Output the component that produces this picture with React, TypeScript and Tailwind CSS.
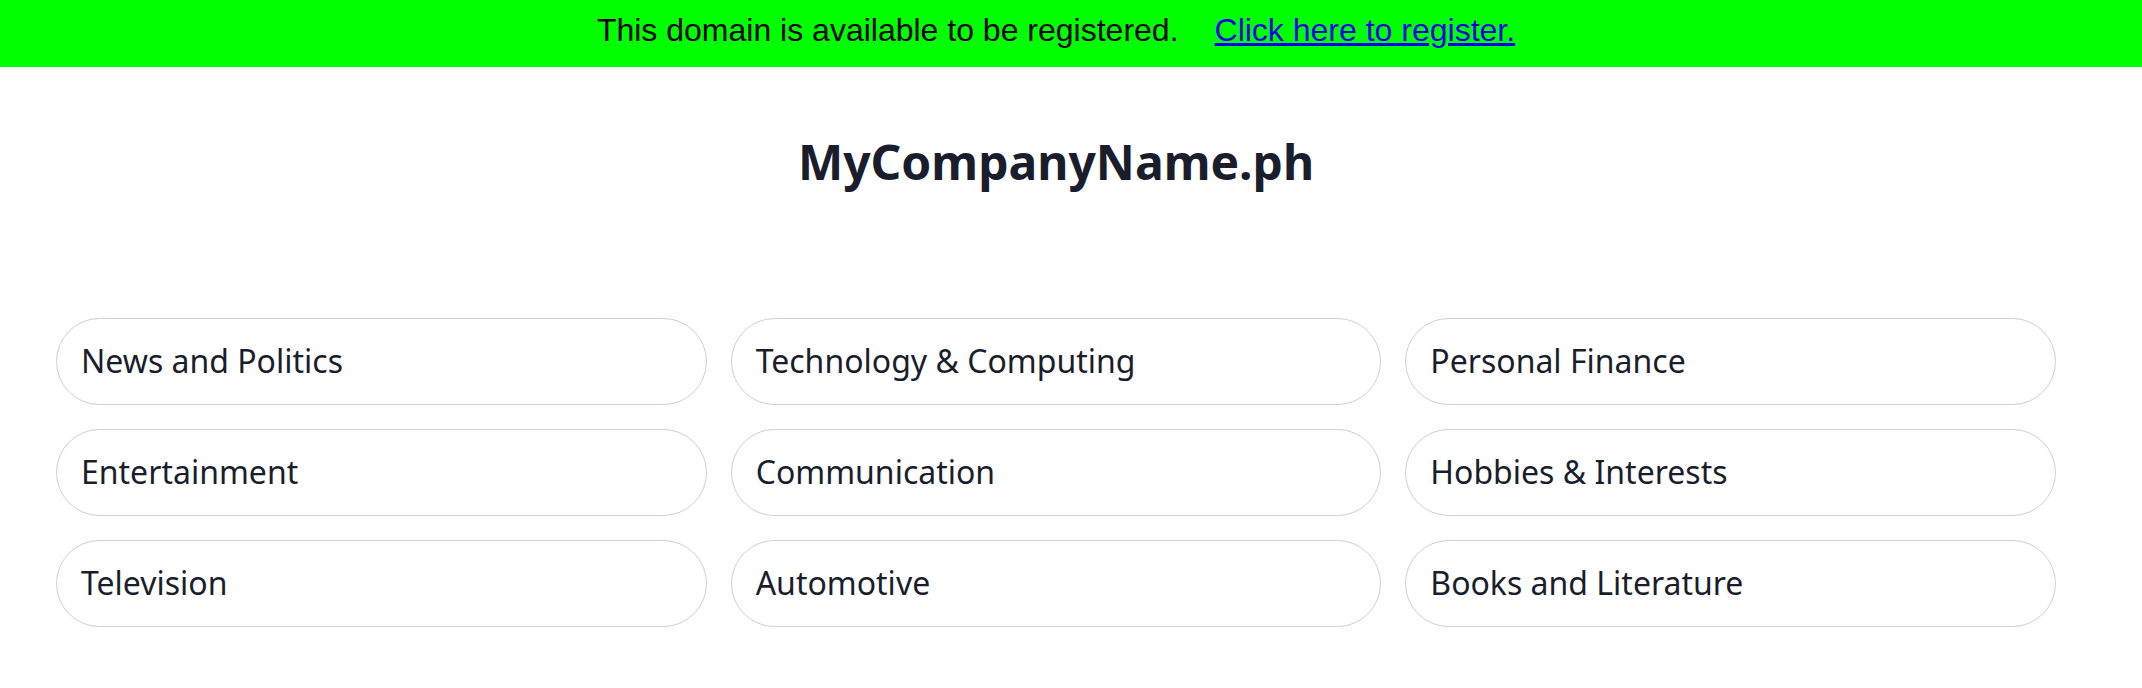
const categories = [
  'News and Politics',
  'Technology & Computing',
  'Personal Finance',
  'Entertainment',
  'Communication',
  'Hobbies & Interests',
  'Television',
  'Automotive',
  'Books and Literature',
]

export default function App() {
  return (
    <div className="min-h-screen bg-white">
      {/* Registration banner */}
      <div className="bg-[#00ff00] h-[67px] pr-[30px] pb-[8px] flex items-center justify-center font-['Liberation_Sans',Arial,sans-serif] text-[32px] text-black">
        <span>This domain is available to be registered.</span>
        <a href="#" className="ml-[36px] underline text-[#0000ee]">
          Click here to register.
        </a>
      </div>

      {/* Main content */}
      <main className="pr-[30px] font-['Noto_Sans',sans-serif]">
        <h1 className="mt-[71px] text-center text-5xl leading-[48px] font-bold text-[#1a1e2c]">
          MyCompanyName.ph
        </h1>

        <div className="mt-[132px] px-14 grid grid-cols-3 gap-x-6 gap-y-6">
          {categories.map((name) => (
            <div
              key={name}
              className="border border-[#cdd0d5] rounded-full px-6 pt-[23px] pb-[25px] text-[32px] leading-[37px] text-[#1a1e2c]"
            >
              {name}
            </div>
          ))}
        </div>
      </main>
    </div>
  )
}
